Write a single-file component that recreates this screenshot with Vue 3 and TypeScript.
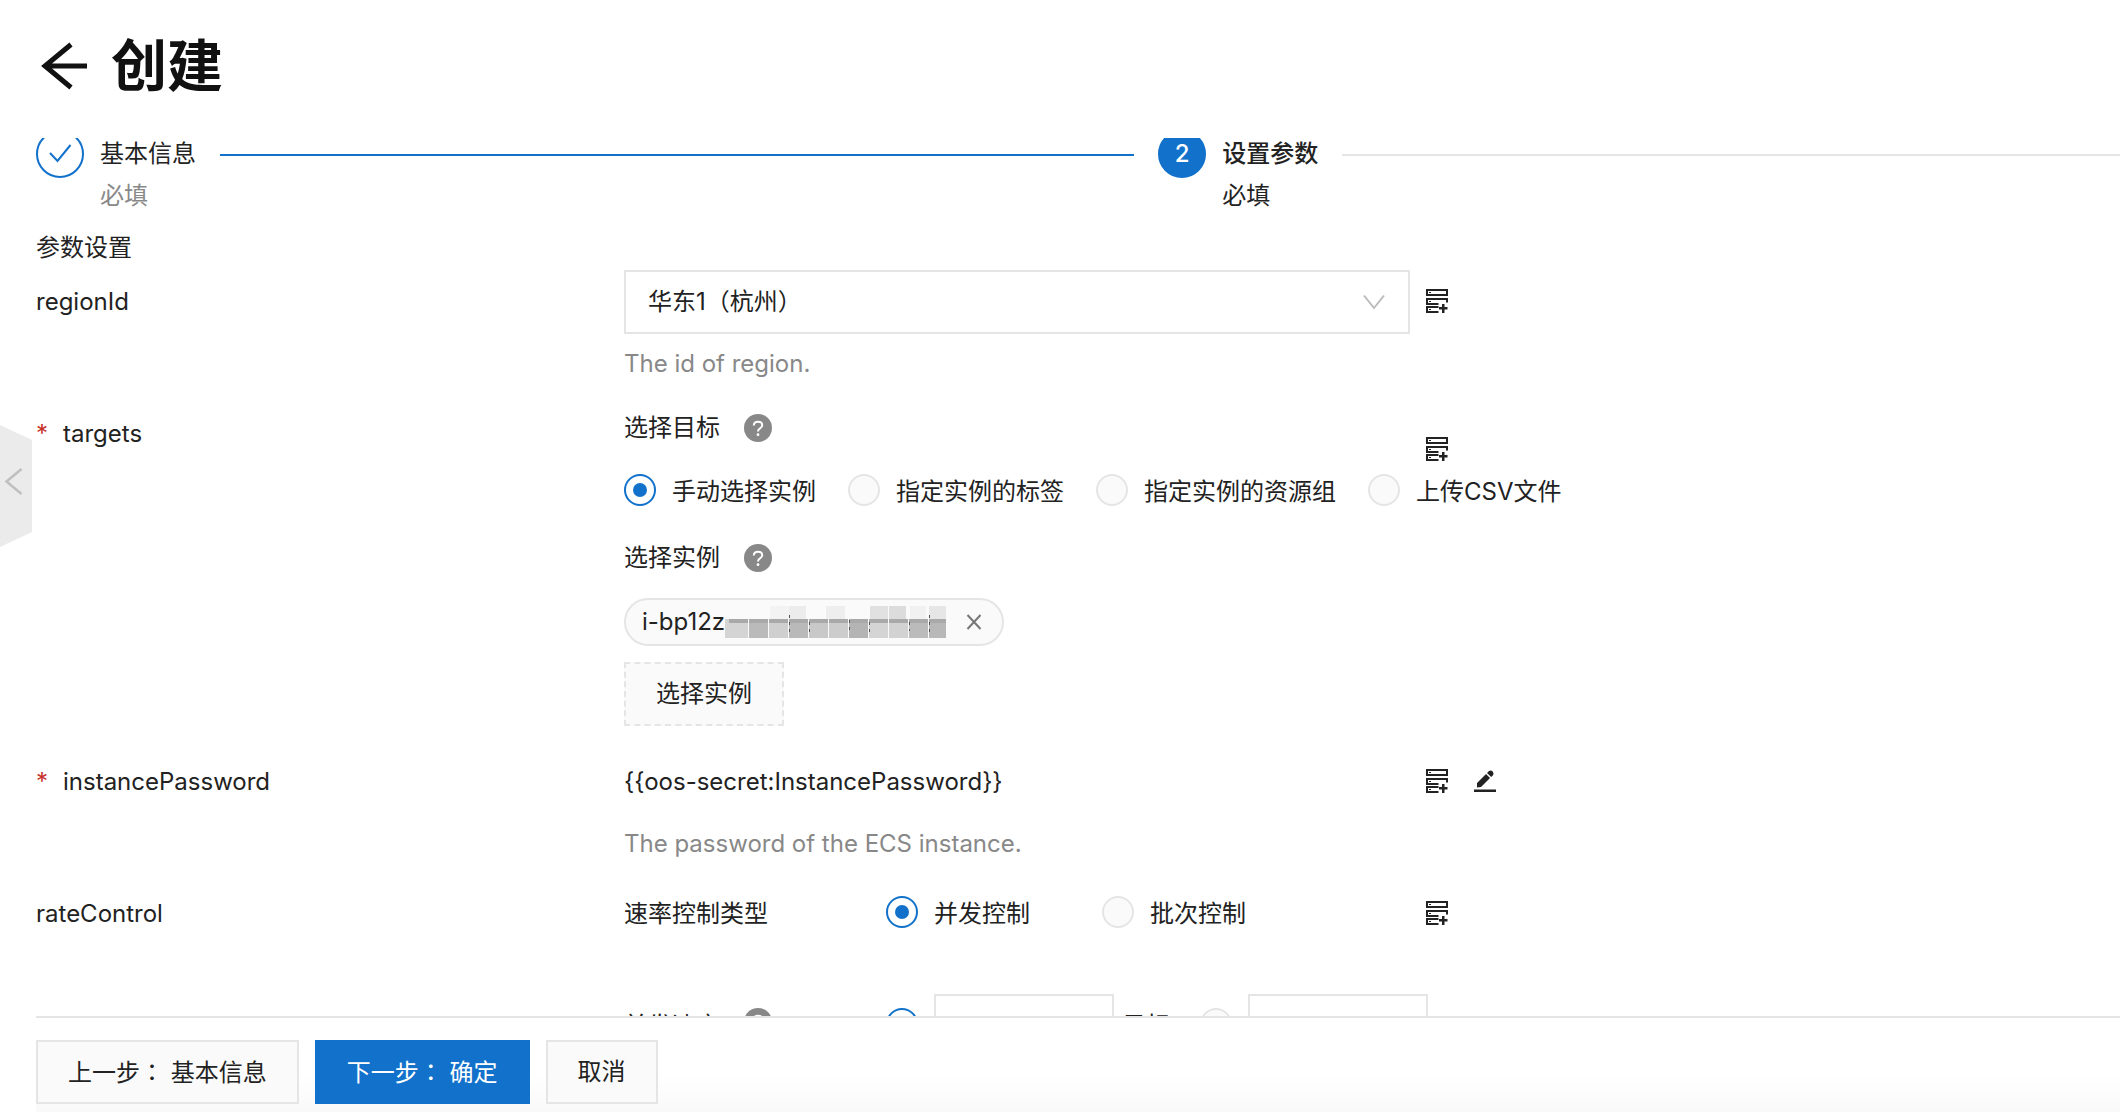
<script setup lang="ts">
import { ref } from 'vue'

interface Option {
  value: string
  label: string
}

const region = ref('cn-hangzhou')
const targetType = ref('manual')
const rateType = ref('concurrency')
const rateUnit = ref('count')
const concurrency = ref('')
const percentage = ref('')
const secret = '{{oos-secret:InstancePassword}}'

const targetOptions: Option[] = [
  { value: 'manual', label: '手动选择实例' },
  { value: 'tag', label: '指定实例的标签' },
  { value: 'group', label: '指定实例的资源组' },
  { value: 'csv', label: '上传CSV文件' },
]

const rateOptions: Option[] = [
  { value: 'concurrency', label: '并发控制' },
  { value: 'batch', label: '批次控制' },
]

const upperCells = [
  { x: 41, w: 19, fill: '#f3f3f3' },
  { x: 60, w: 17, fill: '#ececec' },
  { x: 97, w: 19, fill: '#eeeeee' },
  { x: 141, w: 18, fill: '#e1e1e1' },
  { x: 160, w: 17, fill: '#dcdcdc' },
  { x: 181, w: 16, fill: '#f1f1f1' },
  { x: 200, w: 17, fill: '#e6e6e6' },
]

const lowerFills = [
  '#d4d4d4', '#bababa', '#cfcfcf', '#b9b9b9', '#c8c8c8', '#cccccc',
  '#b4b4b4', '#d4d4d4', '#d2d2d2', '#bbbbbb', '#b8b8b8',
]
</script>

<template>
  <div class="page">
    <header class="header">
      <a class="back" href="#" aria-label="返回">
        <svg width="48" height="48" viewBox="0 0 48 48" fill="none" stroke="#111" stroke-width="5">
          <path d="M47 24H5M31 2.500L5 24L31 45.500" />
        </svg>
      </a>
      <h1 class="title">创建</h1>
    </header>

    <button class="handle" type="button" aria-label="收起">
      <svg width="32" height="122" viewBox="0 0 32 122">
        <path d="M0 0L32 15V107L0 122Z" fill="#ebebeb" />
        <path d="M21.500 44L6.500 56.500L21.500 69" fill="none" stroke="#bfbfbf" stroke-width="2.500" />
      </svg>
    </button>

    <main class="body">
      <ol class="steps">
        <li class="step done">
          <span class="dot">
            <svg width="24" height="24" viewBox="0 0 24 24" fill="none" stroke="#1271ca" stroke-width="2">
              <path d="M2 11L9.500 19L22.500 3" />
            </svg>
          </span>
          <div class="step-text">
            <div class="step-title">基本信息</div>
            <div class="step-desc">必填</div>
          </div>
          <span class="line"></span>
        </li>
        <li class="step current">
          <span class="dot">2</span>
          <div class="step-text">
            <div class="step-title">设置参数</div>
            <div class="step-desc">必填</div>
          </div>
          <span class="line"></span>
        </li>
      </ol>

      <h2 class="section">参数设置</h2>

      <div class="row">
        <label class="name tall" for="region">regionId</label>
        <div class="control">
          <div class="select">
            <select id="region" v-model="region">
              <option value="cn-hangzhou">华东1（杭州）</option>
            </select>
            <svg class="caret" width="22" height="16" viewBox="0 0 22 16" fill="none" stroke="#bbb" stroke-width="2">
              <path d="M1 1.500L11 14L21 1.500" />
            </svg>
          </div>
          <p class="help">The id of region.</p>
        </div>
        <div class="tools tall">
          <button class="icon" type="button" aria-label="选择参数"><svg width="22" height="24"><use href="#param" /></svg></button>
        </div>
      </div>

      <div class="row">
        <div class="name"><span class="star">*</span>targets</div>
        <div class="control">
          <div class="sub">选择目标<span class="hint"><svg width="28" height="28"><use href="#question" /></svg></span></div>
          <div class="radios targets">
            <label v-for="o in targetOptions" :key="o.value" class="radio">
              <input v-model="targetType" type="radio" name="target" :value="o.value" />{{ o.label }}
            </label>
          </div>
          <div class="sub">选择实例<span class="hint"><svg width="28" height="28"><use href="#question" /></svg></span></div>
          <div class="tag">
            <span class="tag-text">i-bp12z</span>
            <svg class="mask" width="222" height="32" viewBox="-4 0 222 32" shape-rendering="crispEdges">
              <rect v-for="c in upperCells" :key="c.x" :x="c.x" y="0" :width="c.w" height="13" :fill="c.fill" />
              <rect x="-4" y="13" width="4" height="19" fill="#d4d4d4" />
              <g v-for="(fill, i) in lowerFills" :key="i">
                <rect :x="i * 20" y="13" :width="i === 10 ? 17 : 19" height="19" :fill="fill" />
                <rect :x="i * 20" y="13" :width="i === 10 ? 17 : 19" height="4" fill="#a9a9a9" />
              </g>
              <path d="M60.500 9v17M80.500 16v12M120.500 14v10M140.500 16v12M180.500 16v9M200.500 9v17" stroke="#555" stroke-dasharray="3 4" />
            </svg>
            <button class="icon close" type="button" aria-label="移除">
              <svg width="16" height="16" viewBox="0 0 16 16" stroke="#777" stroke-width="2"><path d="M1.500 1L14.500 15M14.500 1L1.500 15" /></svg>
            </button>
          </div>
          <button class="btn dashed" type="button">选择实例</button>
        </div>
        <div class="tools lower">
          <button class="icon" type="button" aria-label="选择参数"><svg width="22" height="24"><use href="#param" /></svg></button>
        </div>
      </div>

      <div class="row password">
        <div class="name"><span class="star">*</span>instancePassword</div>
        <div class="control">
          <div class="value">{{ secret }}</div>
          <p class="help wide">The password of the ECS instance.</p>
        </div>
        <div class="tools">
          <button class="icon" type="button" aria-label="选择参数"><svg width="22" height="24"><use href="#param" /></svg></button>
          <button class="icon" type="button" aria-label="编辑">
            <svg width="22" height="24" viewBox="0 0 22 24" fill="#222">
              <path d="M0 20.500h22v2.500H0zM3 14L12 5L16 9L7 18L3 18.500ZM13 4L15 2Q17 0.800 18.700 2.500Q20.300 4.500 19 6.200L17.200 8Z" />
            </svg>
          </button>
        </div>
      </div>

      <div class="row">
        <div class="name">rateControl</div>
        <div class="control">
          <div class="rate">
            <span class="rate-name">速率控制类型</span>
            <div class="radios types">
              <label v-for="o in rateOptions" :key="o.value" class="radio">
                <input v-model="rateType" type="radio" name="rate" :value="o.value" />{{ o.label }}
              </label>
            </div>
          </div>
          <div class="rate amount">
            <span class="rate-name sub">并发速率<span class="hint"><svg width="28" height="28"><use href="#question" /></svg></span></span>
            <div class="radios units">
              <div class="radio">
                <input v-model="rateUnit" type="radio" name="unit" value="count" aria-label="目标" />
                <input id="count" v-model="concurrency" class="box" type="text" />
                <label class="unit" for="count">目标</label>
              </div>
              <div class="radio">
                <input v-model="rateUnit" type="radio" name="unit" value="percent" aria-label="百分比" />
                <input v-model="percentage" class="box" type="text" aria-label="百分比" />
              </div>
            </div>
          </div>
        </div>
        <div class="tools">
          <button class="icon" type="button" aria-label="选择参数"><svg width="22" height="24"><use href="#param" /></svg></button>
        </div>
      </div>
    </main>

    <footer class="footer">
      <button class="btn" type="button">上一步<span class="colon">：</span> 基本信息</button>
      <button class="btn primary" type="button">下一步<span class="colon">：</span> 确定</button>
      <button class="btn" type="button">取消</button>
    </footer>

    <svg class="defs" width="0" height="0" aria-hidden="true">
      <symbol id="param" viewBox="0 0 22 24">
        <path d="M1 1H21V6H1ZM21 13.500V10H1V15H12.500M12.500 18H1V23H12.500" fill="none" stroke="#222" stroke-width="2" />
        <path d="M3 3h2v1H3zM3 12h2v1H3zM3 20h2v1H3zM16 15h2.500v3h3v2.500h-3v3.500h-2.500v-3.500h-3v-2.500h3z" fill="#222" />
      </symbol>
      <symbol id="question" viewBox="0 0 28 28">
        <circle cx="14" cy="14" r="14" fill="#888" />
        <path d="M9.800 11.500Q9.800 7.800 14 7.800Q18.200 7.800 18.200 11.200Q18.200 13 16 14.400Q14 15.500 14 17.600" fill="none" stroke="#fff" stroke-width="2" />
        <circle cx="14" cy="20.700" r="1.400" fill="#fff" />
      </symbol>
    </svg>
  </div>
</template>

<style>
body {
  margin: 0;
}
</style>

<style scoped>
.page {
  position: relative;
  display: flex;
  flex-direction: column;
  height: 100vh;
  overflow: hidden;
  background: #fff;
  color: #222;
  font-family: Inter, 'Noto Sans CJK SC', sans-serif;
  font-size: 24px;
  line-height: 36px;
}

.page *,
.page *::before {
  box-sizing: border-box;
}

button,
input,
select {
  font: inherit;
  color: inherit;
}

.header {
  flex: none;
  display: flex;
  align-items: center;
  gap: 23px;
  height: 138px;
  padding: 0 40px 6px;
}

.back svg,
.icon svg,
.hint svg,
.handle svg {
  display: block;
}

.title {
  margin: 0;
  color: #111;
  font-size: 56px;
  line-height: 72px;
  font-weight: 700;
}

.handle {
  position: absolute;
  left: 0;
  top: 425px;
  padding: 0;
  border: 0;
  background: none;
}

.body {
  flex: 1;
  min-height: 0;
  overflow: hidden;
  padding-left: 36px;
}

.steps {
  display: grid;
  grid-template-columns: 7fr 6fr;
  margin: -8px 0 0;
  padding: 0;
  list-style: none;
}

.step {
  display: flex;
}

.dot {
  flex: none;
  display: flex;
  align-items: center;
  justify-content: center;
  width: 48px;
  height: 48px;
  border: 2px solid #1271ca;
  border-radius: 50%;
}

.current .dot {
  background: #1271ca;
  color: #fff;
  font-weight: 500;
}

.step-text {
  margin: 0 24px 0 16px;
}

.step-title {
  line-height: 48px;
}

.done .step-desc {
  color: #888;
}

.current .step-title {
  font-weight: 500;
}

.line {
  flex: 1;
  height: 2px;
  margin: 24px 24px 0 0;
  background: #1271ca;
}

.current .line {
  margin-right: 0;
  background: #e5e5e5;
}

.section {
  margin: 16px 0 4px;
  font-size: 24px;
  font-weight: 400;
}

.row {
  display: grid;
  grid-template-columns: minmax(0, 588fr) minmax(0, 786fr) minmax(0, 710fr);
  margin-bottom: 28px;
}

.name,
.tools,
.value,
.rate {
  line-height: 48px;
}

.name.tall {
  line-height: 64px;
}

.star {
  display: inline-block;
  width: 27px;
  color: #c8322b;
}

.tools {
  display: flex;
  align-items: center;
  align-self: start;
  gap: 26px;
  height: 46px;
  padding-left: 16px;
}

.tools.tall {
  height: 62px;
}

.tools.lower {
  height: 78px;
}

.icon {
  padding: 0;
  border: 0;
  background: none;
}

.select {
  position: relative;
}

.select select {
  display: block;
  width: 100%;
  height: 64px;
  padding: 0 22px;
  border: 2px solid #e5e5e5;
  border-radius: 0;
  background: #fff;
  appearance: none;
}

.caret {
  position: absolute;
  right: 25px;
  top: 24px;
  pointer-events: none;
}

.help {
  margin: 12px 0 0;
  color: #888;
}

.help.wide {
  margin-top: 20px;
}

.sub {
  display: flex;
  align-items: center;
  gap: 24px;
}

.radios {
  display: flex;
  align-items: center;
  white-space: nowrap;
}

.targets {
  gap: 32px;
  margin: 28px 0 30px;
}

.types {
  gap: 72px;
}

.units {
  gap: 30px;
}

.radio {
  display: flex;
  align-items: center;
  gap: 16px;
}

.radio input[type='radio'] {
  flex: none;
  display: grid;
  place-items: center;
  width: 32px;
  height: 32px;
  margin: 0 0 4px;
  border: 2px solid #e5e5e5;
  border-radius: 50%;
  background: #fafafa;
  appearance: none;
}

.radio input[type='radio']:checked {
  border-color: #1271ca;
  background: #fff;
}

.radio input[type='radio']:checked::before {
  content: '';
  width: 14px;
  height: 14px;
  border-radius: 50%;
  background: #1271ca;
}

.tag {
  display: flex;
  align-items: center;
  width: 380px;
  height: 48px;
  margin: 22px 0 16px;
  padding: 0 20px 0 16px;
  border: 2px solid #e5e5e5;
  border-radius: 24px;
  background: #fafafa;
}

.tag-text {
  width: 83px;
  white-space: nowrap;
}

.mask {
  flex: none;
}

.close {
  margin-left: auto;
}

.btn {
  height: 64px;
  padding: 0 30px;
  border: 2px solid #e5e5e5;
  background: #fafafa;
  white-space: nowrap;
}

.btn.dashed {
  display: block;
  border-style: dashed;
}

.btn.primary {
  border-color: #1271ca;
  background: #1271ca;
  color: #fff;
}

.colon {
  font-family: 'Noto Sans CJK TC', sans-serif;
}

.password {
  margin-top: 32px;
}

.rate {
  display: grid;
  grid-template-columns: 262px auto;
  align-items: center;
}

.amount {
  margin-top: 56px;
}

.amount .hint {
  margin-bottom: 8px;
}

.box {
  width: 180px;
  height: 64px;
  padding: 0 16px;
  border: 2px solid #e5e5e5;
  background: #fff;
}

.unit {
  margin-left: -8px;
}

.footer {
  flex: none;
  display: flex;
  gap: 16px;
  margin-left: 36px;
  padding: 22px 0 8px;
  border-top: 2px solid #e5e5e5;
  background: linear-gradient(#fff 60%, #f9f9f9);
}

.defs {
  position: absolute;
}
</style>
